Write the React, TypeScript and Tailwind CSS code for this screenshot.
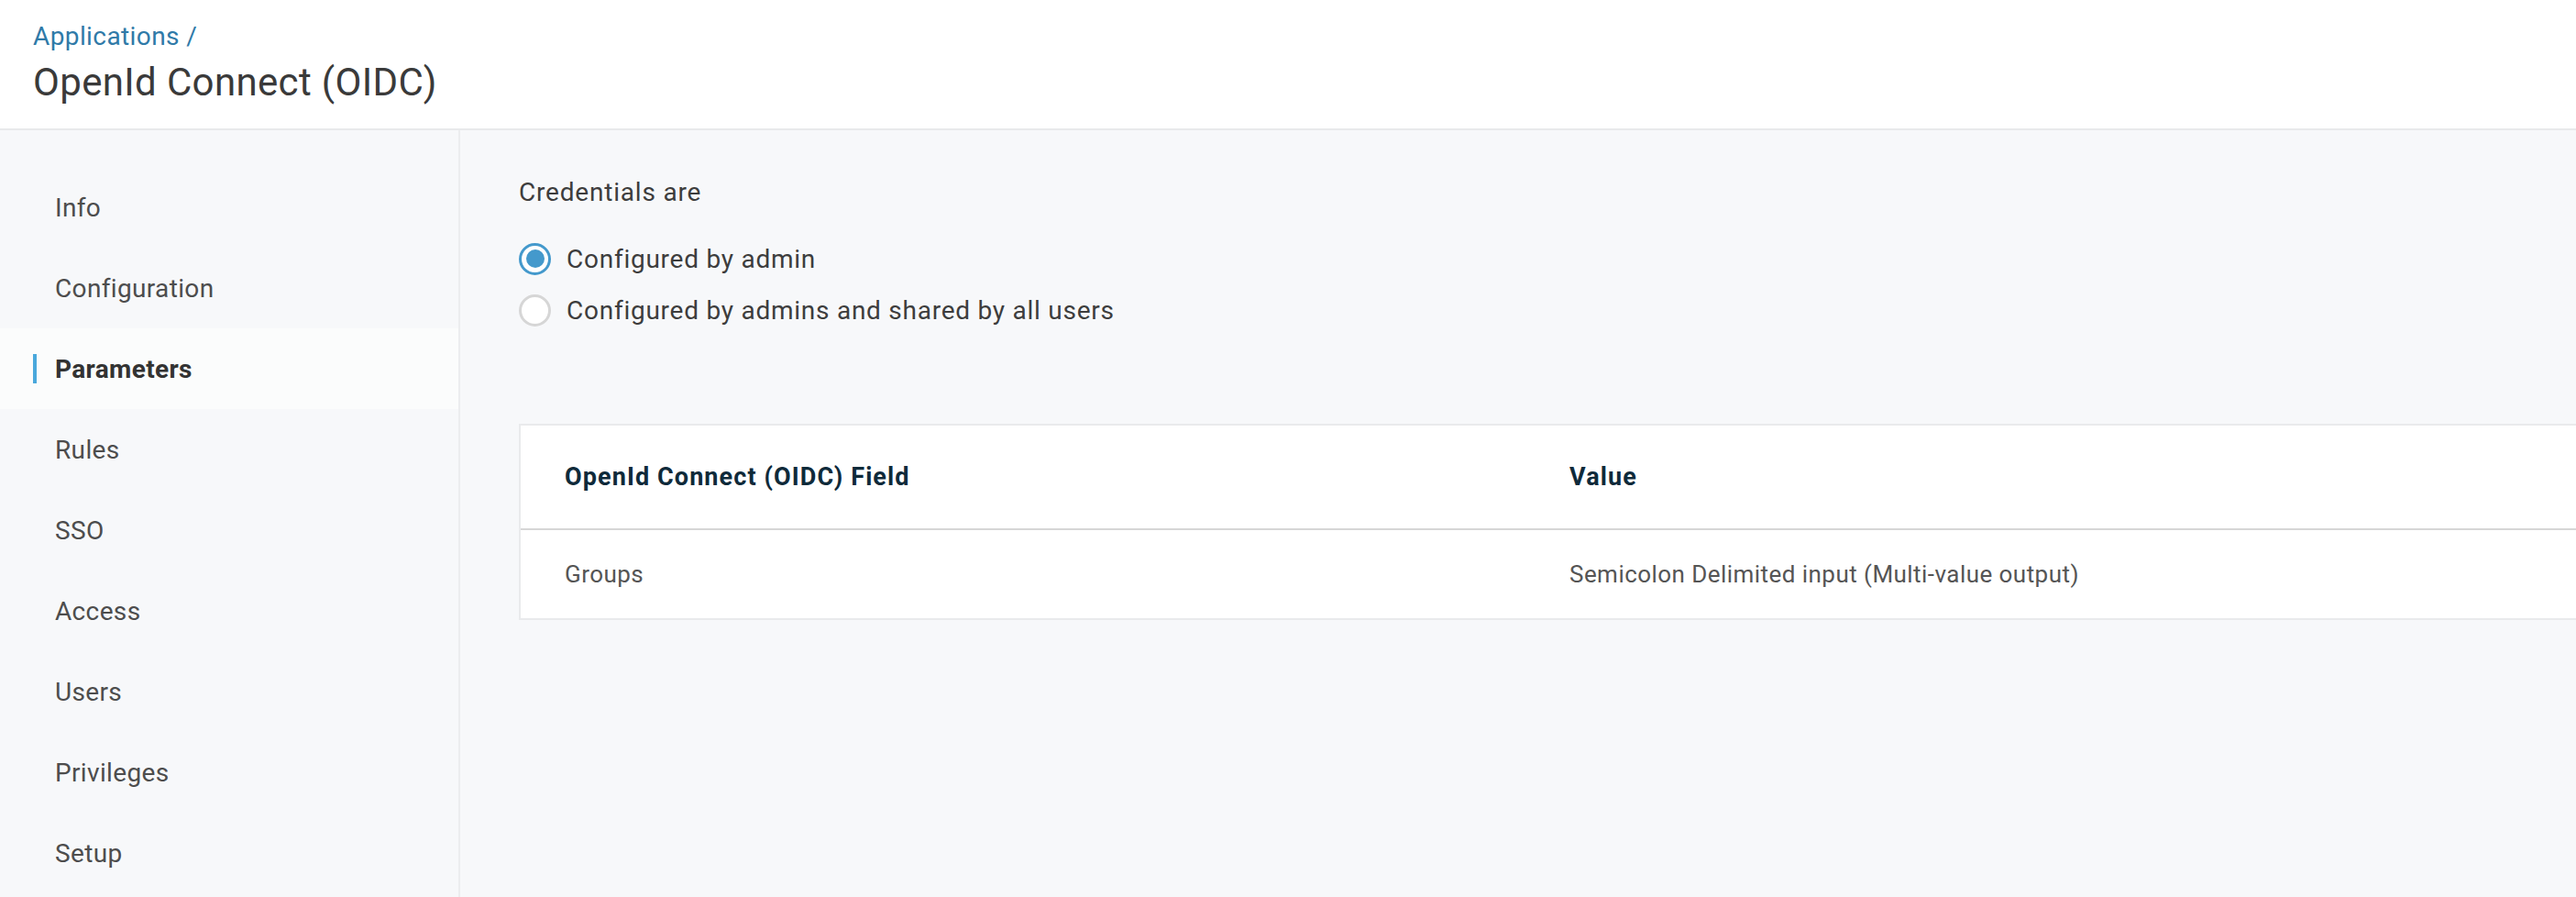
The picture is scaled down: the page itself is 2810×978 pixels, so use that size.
import React from "react";

const navItems = [
  "Info",
  "Configuration",
  "Parameters",
  "Rules",
  "SSO",
  "Access",
  "Users",
  "Privileges",
  "Setup",
];

function Radio({ checked, label }: { checked: boolean; label: string }) {
  return (
    <div className="flex h-[56px] items-center gap-[17px]">
      {checked ? (
        <div className="flex h-[35px] w-[35px] items-center justify-center rounded-full border-[3px] border-[#4499cc] bg-white">
          <div className="h-[20px] w-[20px] rounded-full bg-[#4499cc]" />
        </div>
      ) : (
        <div className="h-[35px] w-[35px] rounded-full border-[3px] border-[#d6d6d6] bg-white" />
      )}
      <span className="text-[28px] leading-[33px] tracking-[0.75px] text-[#3d3d3d]">{label}</span>
    </div>
  );
}

export default function App() {
  return (
    <div
      className="flex h-[978px] w-full flex-col overflow-hidden bg-[#f7f8fa]"
      style={{ fontFamily: "Roboto, 'Liberation Sans', sans-serif" }}
    >
      <header className="h-[142px] shrink-0 border-b-2 border-[#e8e9eb] bg-white pl-[36px] pt-[23px]">
        <div className="text-[28px] leading-[33px] tracking-[0.4px] text-[#2f7aa8]">Applications /</div>
        <div className="mt-[9px] text-[42px] leading-[49px] tracking-[0.35px] text-[#3a3a3a]">OpenId Connect (OIDC)</div>
      </header>
      <div className="flex flex-1">
        <nav className="w-[502px] shrink-0 border-r-2 border-[#ecedef] bg-[#f7f8fa] pt-[40px]">
          {navItems.map((item) => {
            const active = item === "Parameters";
            return (
              <div
                key={item}
                className={
                  active
                    ? "flex h-[88px] items-center gap-[20px] bg-[#fbfcfc] pl-[36px]"
                    : "flex h-[88px] items-center gap-[20px] pl-[36px]"
                }
              >
                <div className={active ? "h-[32px] w-[4px] bg-[#4aa8dc]" : "h-[32px] w-[4px]"} />
                <span
                  className={
                    active
                      ? "text-[28px] font-bold leading-[33px] tracking-[0.35px] text-[#333333]"
                      : "text-[28px] leading-[33px] tracking-[0.35px] text-[#4d4d4d]"
                  }
                >
                  {item}
                </span>
              </div>
            );
          })}
        </nav>
        <main className="flex-1 pl-[64px] pt-[51px]">
          <div className="text-[28px] leading-[33px] tracking-[0.8px] text-[#3d3d3d]">Credentials are</div>
          <div className="mt-[28px] flex flex-col">
            <Radio checked label="Configured by admin" />
            <Radio checked={false} label="Configured by admins and shared by all users" />
          </div>
          <div className="mt-[96px] border-2 border-r-0 border-[#e9eaec] bg-white">
            <div className="flex h-[114px] items-center border-b-2 border-[#d6d6d6]">
              <div className="w-[1096px] shrink-0 pl-[48px] text-[27px] font-bold tracking-[1.1px] text-[#0f2a3a]">
                OpenId Connect (OIDC) Field
              </div>
              <div className="pl-[48px] text-[27px] font-bold tracking-[1.1px] text-[#0f2a3a]">Value</div>
            </div>
            <div className="flex h-[96px] items-center">
              <div className="w-[1096px] shrink-0 pl-[48px] text-[26px] tracking-[0.45px] text-[#555555]">Groups</div>
              <div className="pl-[48px] text-[26px] tracking-[0.45px] text-[#555555]">Semicolon Delimited input (Multi-value output)</div>
            </div>
          </div>
        </main>
      </div>
    </div>
  );
}
